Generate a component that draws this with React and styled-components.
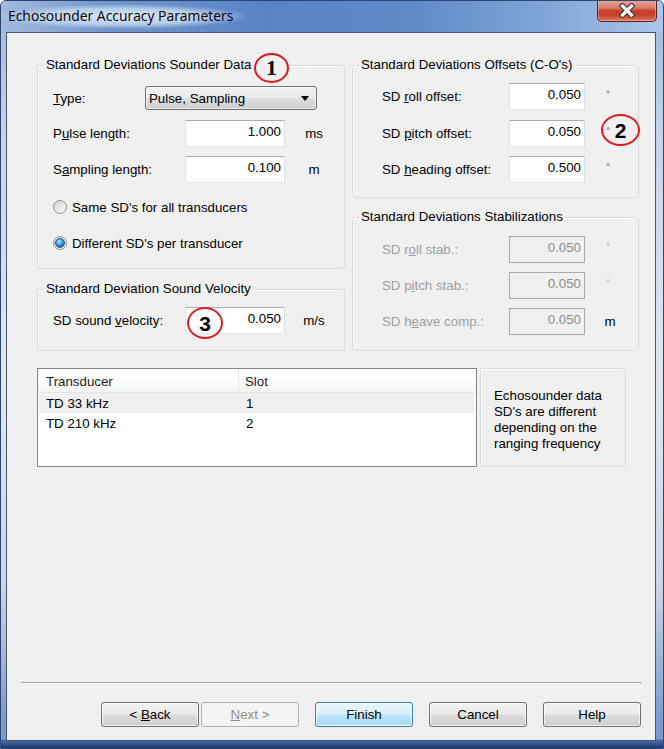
import React from "react";
import styled, { createGlobalStyle, css } from "styled-components";

const Global = createGlobalStyle`
  html, body { margin: 0; padding: 0; }
  body {
    font-family: "Liberation Sans", Arial, sans-serif;
    font-size: 13.3px;
    color: #000;
    background: #fff;
  }
  * { box-sizing: border-box; }
`;

const Window = styled.div`
  position: relative;
  width: 664px;
  height: 749px;
  display: flex;
  flex-direction: column;
  border: 1px solid #2d4572;
  border-radius: 6px 6px 0 0;
  overflow: hidden;
  background:
    linear-gradient(180deg, rgba(0,0,0,0) calc(100% - 9px), #4b70b1 calc(100% - 8px), #1b366b 100%),
    linear-gradient(180deg, #9cb6dd 0%, #c6d4e9 18%, #e2e7ee 50%, #cdd6e5 78%, #7d9bcb 96%);
`;

const TitleBar = styled.div`
  height: 31px;
  flex: none;
  display: flex;
  align-items: flex-start;
  justify-content: space-between;
  background: linear-gradient(90deg, #a3badd 0%, #7196cd 16%, #5884c5 40%, #5f8ac8 62%, #84a8d8 84%, #adc7e8 100%);
`;

const TitleText = styled.span`
  margin: 3px 0 0 -4px;
  padding: 3px 16px 5px 11px;
  font-family: "Open Sans", "Liberation Sans", sans-serif;
  font-size: 13.9px;
  line-height: 17px;
  color: #000;
  background: radial-gradient(closest-side, rgba(226,236,248,0.95) 0%, rgba(206,222,243,0.75) 65%, rgba(206,222,243,0) 100%);
`;

const CloseButton = styled.div`
  width: 60px;
  height: 22px;
  margin: -1px 6px 0 0;
  border: 1px solid #5a1d16;
  border-top: none;
  border-radius: 0 0 5px 5px;
  display: flex;
  align-items: center;
  justify-content: center;
  background: linear-gradient(180deg, #e8a898 0%, #d97b68 38%, #c4402b 52%, #c63c26 70%, #dd7a5e 100%);
  box-shadow: inset 0 0 0 1px rgba(255, 210, 200, 0.45);
`;

const Client = styled.div`
  flex: 1;
  margin: 0 7px 7px 5px;
  border: 1px solid #46556b;
  background: #f0f0f0;
  display: flex;
  flex-direction: column;
`;

const Content = styled.div`
  padding: 32px 15px 0 30px;
  display: flex;
  flex-direction: column;
`;

const TopGrid = styled.div`
  display: grid;
  grid-template-columns: 308px 287px;
  column-gap: 7px;
  align-items: start;
`;

const Column = styled.div`
  display: flex;
  flex-direction: column;
`;

const GroupBox = styled.div`
  margin-top: ${(p) => p.$mt || 0}px;
  border: 1px solid #d5dfe5;
  border-radius: 3px;
  box-shadow: inset 1px 1px 0 #fff;
  padding: 0 0 ${(p) => p.$pb}px ${(p) => p.$pl}px;
  display: flex;
  flex-direction: column;
`;

const GroupTitle = styled.span`
  align-self: flex-start;
  margin: -9px 0 0 ${(p) => 7 - p.$pl}px;
  padding: 0 1px;
  height: 16px;
  line-height: 16px;
  background: #f0f0f0;
  white-space: nowrap;
`;

const Row = styled.div`
  display: flex;
  align-items: center;
  height: ${(p) => p.$h}px;
  margin-top: ${(p) => p.$mt}px;
`;

const Label = styled.span`
  width: ${(p) => p.$w}px;
  flex: none;
  white-space: nowrap;
  color: ${(p) => (p.$disabled ? "#9e9e9e" : "#000")};
`;

const Key = styled.span`
  text-decoration: underline;
  text-underline-offset: 1px;
`;

const TextBox = styled.input`
  width: ${(p) => p.$w}px;
  height: 27px;
  flex: none;
  border: 1px solid;
  border-color: #abadb3 #dbdfe6 #e3e9ef #e2e3ea;
  background: #fff;
  font-family: "Liberation Sans", Arial, sans-serif;
  font-size: 13.3px;
  color: #000;
  text-align: right;
  padding: 0 3px 4px 3px;
  margin: 0;
  outline: none;
  &:disabled {
    background: #f0f0f0;
    border-color: #aaaaaa;
    color: #8c8c8c;
    -webkit-text-fill-color: #8c8c8c;
    opacity: 1;
  }
`;

const Unit = styled.span`
  width: 30px;
  margin-left: ${(p) => p.$ml}px;
  text-align: center;
  flex: none;
`;

const Degree = styled.span`
  font-size: 9px;
  position: relative;
  top: -4px;
  color: ${(p) => (p.$disabled ? "#9e9e9e" : "#2a4f9a")};
`;

const Combo = styled.div`
  width: 172px;
  height: 24px;
  border: 1px solid #707070;
  border-radius: 3px;
  padding: 0 7px 0 3px;
  display: flex;
  align-items: center;
  justify-content: space-between;
  background: linear-gradient(180deg, #f2f2f2 0%, #ebebeb 48%, #dddddd 52%, #cfcfcf 100%);
  box-shadow: inset 0 0 0 1px rgba(255,255,255,0.6);
`;

const ComboArrow = styled.span`
  width: 0;
  height: 0;
  border-left: 4px solid transparent;
  border-right: 4px solid transparent;
  border-top: 5px solid #000;
`;

const RadioRow = styled.label`
  display: flex;
  align-items: center;
  gap: 5px;
  height: ${(p) => p.$h}px;
  margin-top: ${(p) => p.$mt}px;
`;

const RadioCircle = styled.span`
  width: 14px;
  height: 14px;
  flex: none;
  border-radius: 50%;
  border: 1px solid #8e8f8f;
  display: flex;
  align-items: center;
  justify-content: center;
  background: linear-gradient(135deg, #cfcfcf 0%, #e8e8e8 50%, #fbfbfb 100%);
  ${(p) =>
    p.$checked &&
    css`
      background: linear-gradient(135deg, #e2e2e2 0%, #f6f6f6 100%);
      &::after {
        content: "";
        width: 8px;
        height: 8px;
        border-radius: 50%;
        border: 1px solid #1a4e7c;
        background: radial-gradient(circle at 40% 30%, #b8e4fb 0%, #47a4e0 40%, #105694 100%);
      }
    `}
`;

const ListRow = styled.div`
  margin-top: 17px;
  height: 99px;
  display: flex;
  gap: 3px;
`;

const ListView = styled.div`
  width: 440px;
  border: 1px solid #828790;
  background: #fff;
  display: flex;
  flex-direction: column;
`;

const ListHeader = styled.div`
  height: 24px;
  display: flex;
  border-bottom: 1px solid #e3e5e8;
  background: linear-gradient(180deg, #ffffff 0%, #ffffff 45%, #f3f4f6 100%);
`;

const HeaderCell = styled.div`
  width: ${(p) => p.$w}px;
  padding: 2px 0 0 ${(p) => p.$pl}px;
  display: flex;
  align-items: center;
  color: #1c1c1c;
  border-right: 1px solid ${(p) => (p.$divider ? "#e3e5e8" : "transparent")};
`;

const ListItem = styled.div`
  height: 20px;
  margin: 0 2px 0 1px;
  display: flex;
  align-items: center;
  background: ${(p) => (p.$highlight ? "#f0f0f0" : "transparent")};
`;

const ItemCell = styled.div`
  width: ${(p) => p.$w}px;
  padding-left: ${(p) => p.$pl}px;
`;

const InfoBox = styled.div`
  width: 146px;
  border: 1px solid #d5dfe5;
  border-radius: 3px;
  box-shadow: inset 1px 1px 0 #fff;
  padding: 4px 0 0 13px;
  display: flex;
  align-items: center;
  line-height: 16px;
`;

const Spacer = styled.div`
  flex: 1;
`;

const Footer = styled.div`
  padding: 0 14px 13px 14px;
  display: flex;
  flex-direction: column;
`;

const Separator = styled.div`
  height: 2px;
  border-top: 1px solid #a0a0a0;
  border-bottom: 1px solid #ffffff;
`;

const ButtonRow = styled.div`
  margin-top: 18px;
  display: flex;
  justify-content: flex-end;
  gap: 16px;
`;

const ButtonPair = styled.div`
  display: flex;
  gap: 2px;
`;

const Button = styled.div`
  width: 98px;
  height: 25px;
  border: 1px solid #707070;
  border-radius: 3px;
  display: flex;
  align-items: center;
  justify-content: center;
  white-space: pre;
  color: #000;
  background: linear-gradient(180deg, #f2f2f2 0%, #ebebeb 48%, #dddddd 52%, #cfcfcf 100%);
  box-shadow: inset 0 0 0 1px rgba(255,255,255,0.7);
  ${(p) =>
    p.$default &&
    css`
      border-color: #3c7fb1;
      background: linear-gradient(180deg, #eaf6fd 0%, #d9f0fc 48%, #bee6fd 52%, #a7d9f5 100%);
      box-shadow: inset 0 0 0 1px rgba(255,255,255,0.8);
    `}
  ${(p) =>
    p.$disabled &&
    css`
      border-color: #adb2b5;
      background: #f4f4f4;
      color: #8b8b8b;
      box-shadow: none;
    `}
`;

const Annotation = styled.div`
  position: absolute;
  left: ${(p) => p.$x}px;
  top: ${(p) => p.$y}px;
  width: ${(p) => p.$w}px;
  height: ${(p) => p.$h}px;
  border: 2px solid #e0161f;
  border-radius: 50%;
  background: ${(p) => p.$bg || "transparent"};
  display: flex;
  align-items: center;
  justify-content: center;
  font-family: ${(p) => (p.$serif ? '"Liberation Serif", serif' : '"Liberation Sans", Arial, sans-serif')};
  font-weight: bold;
  font-size: ${(p) => p.$fs}px;
  line-height: 1;
  color: #000;
`;

const DataField = ({ label, labelW, value, inputW, unit, unitMl, disabled }) => (
  <>
    <Label $w={labelW} $disabled={disabled}>{label}</Label>
    <TextBox $w={inputW} defaultValue={value} disabled={disabled} />
    <Unit $ml={unitMl}>{unit}</Unit>
  </>
);

export default function App() {
  return (
    <>
      <Global />
      <Window>
        <TitleBar>
          <TitleText>Echosounder Accuracy Parameters</TitleText>
          <CloseButton>
            <svg width="16" height="15" viewBox="0 0 16 15">
              <path d="M3.5 3 L12.5 12 M12.5 3 L3.5 12" stroke="#3a3a3a" strokeWidth="5.5" strokeLinecap="square" />
              <path d="M3.5 3 L12.5 12 M12.5 3 L3.5 12" stroke="#ffffff" strokeWidth="3.2" strokeLinecap="square" />
            </svg>
          </CloseButton>
        </TitleBar>

        <Client>
          <Content>
            <TopGrid>
              <Column>
                <GroupBox $pl={15} $pb={15}>
                  <GroupTitle $pl={15}>Standard Deviations Sounder Data</GroupTitle>
                  <Row $h={24} $mt={13}>
                    <Label $w={92}><Key>T</Key>ype:</Label>
                    <Combo>
                      <span>Pulse, Sampling</span>
                      <ComboArrow />
                    </Combo>
                  </Row>
                  <Row $h={27} $mt={10}>
                    <DataField
                      label={<>P<Key>u</Key>lse length:</>}
                      labelW={132}
                      value="1.000"
                      inputW={100}
                      unit="ms"
                      unitMl={14}
                    />
                  </Row>
                  <Row $h={27} $mt={9}>
                    <DataField
                      label={<>S<Key>a</Key>mpling length:</>}
                      labelW={132}
                      value="0.100"
                      inputW={100}
                      unit="m"
                      unitMl={14}
                    />
                  </Row>
                  <RadioRow $h={20} $mt={14}>
                    <RadioCircle />
                    <span>Same SD's for all transducers</span>
                  </RadioRow>
                  <RadioRow $h={20} $mt={16}>
                    <RadioCircle $checked />
                    <span>Different SD's per transducer</span>
                  </RadioRow>
                </GroupBox>

                <GroupBox $mt={20} $pl={15} $pb={16}>
                  <GroupTitle $pl={15}>Standard Deviation Sound Velocity</GroupTitle>
                  <Row $h={27} $mt={10}>
                    <DataField
                      label={<>SD sound <Key>v</Key>elocity:</>}
                      labelW={132}
                      value="0.050"
                      inputW={100}
                      unit="m/s"
                      unitMl={14}
                    />
                  </Row>
                </GroupBox>
              </Column>

              <Column>
                <GroupBox $pl={29} $pb={14}>
                  <GroupTitle $pl={29}>Standard Deviations Offsets (C-O's)</GroupTitle>
                  <Row $h={27} $mt={10}>
                    <DataField label={<>SD <Key>r</Key>oll offset:</>} labelW={127} value="0.050" inputW={76} unit={<Degree>°</Degree>} unitMl={8} />
                  </Row>
                  <Row $h={27} $mt={10}>
                    <DataField label={<>SD <Key>p</Key>itch offset:</>} labelW={127} value="0.050" inputW={76} unit={<Degree>°</Degree>} unitMl={8} />
                  </Row>
                  <Row $h={27} $mt={9}>
                    <DataField label={<>SD <Key>h</Key>eading offset:</>} labelW={127} value="0.500" inputW={76} unit={<Degree>°</Degree>} unitMl={8} />
                  </Row>
                </GroupBox>

                <GroupBox $mt={19} $pl={29} $pb={15}>
                  <GroupTitle $pl={29}>Standard Deviations Stabilizations</GroupTitle>
                  <Row $h={27} $mt={11}>
                    <DataField disabled label={<>SD r<Key>o</Key>ll stab.:</>} labelW={127} value="0.050" inputW={76} unit={<Degree $disabled>°</Degree>} unitMl={8} />
                  </Row>
                  <Row $h={27} $mt={9}>
                    <DataField disabled label={<>SD p<Key>i</Key>tch stab.:</>} labelW={127} value="0.050" inputW={76} unit={<Degree $disabled>°</Degree>} unitMl={8} />
                  </Row>
                  <Row $h={27} $mt={9}>
                    <DataField disabled label={<>SD h<Key>e</Key>ave comp.:</>} labelW={127} value="0.050" inputW={76} unit="m" unitMl={10} />
                  </Row>
                </GroupBox>
              </Column>
            </TopGrid>

            <ListRow>
              <ListView>
                <ListHeader>
                  <HeaderCell $w={201} $pl={8} $divider>Transducer</HeaderCell>
                  <HeaderCell $w={236} $pl={6}>Slot</HeaderCell>
                </ListHeader>
                <ListItem $highlight>
                  <ItemCell $w={201} $pl={7}>TD 33 kHz</ItemCell>
                  <ItemCell $w={200} $pl={6}>1</ItemCell>
                </ListItem>
                <ListItem>
                  <ItemCell $w={201} $pl={7}>TD 210 kHz</ItemCell>
                  <ItemCell $w={200} $pl={6}>2</ItemCell>
                </ListItem>
              </ListView>
              <InfoBox>
                <span>
                  Echosounder data
                  <br />
                  SD's are different
                  <br />
                  depending on the
                  <br />
                  ranging frequency
                </span>
              </InfoBox>
            </ListRow>
          </Content>

          <Spacer />

          <Footer>
            <Separator />
            <ButtonRow>
              <ButtonPair>
                <Button>{"< "}<Key>B</Key>ack</Button>
                <Button $disabled><Key>N</Key>{"ext >"}</Button>
              </ButtonPair>
              <Button $default>Finish</Button>
              <Button>Cancel</Button>
              <Button>Help</Button>
            </ButtonRow>
          </Footer>
        </Client>

        <Annotation $x={253} $y={52} $w={35} $h={30} $fs={22} $serif $bg="#f0f0f0">1</Annotation>
        <Annotation $x={600} $y={113} $w={39} $h={32} $fs={21}>2</Annotation>
        <Annotation $x={186} $y={306} $w={36} $h={32} $fs={21}>3</Annotation>
      </Window>
    </>
  );
}
